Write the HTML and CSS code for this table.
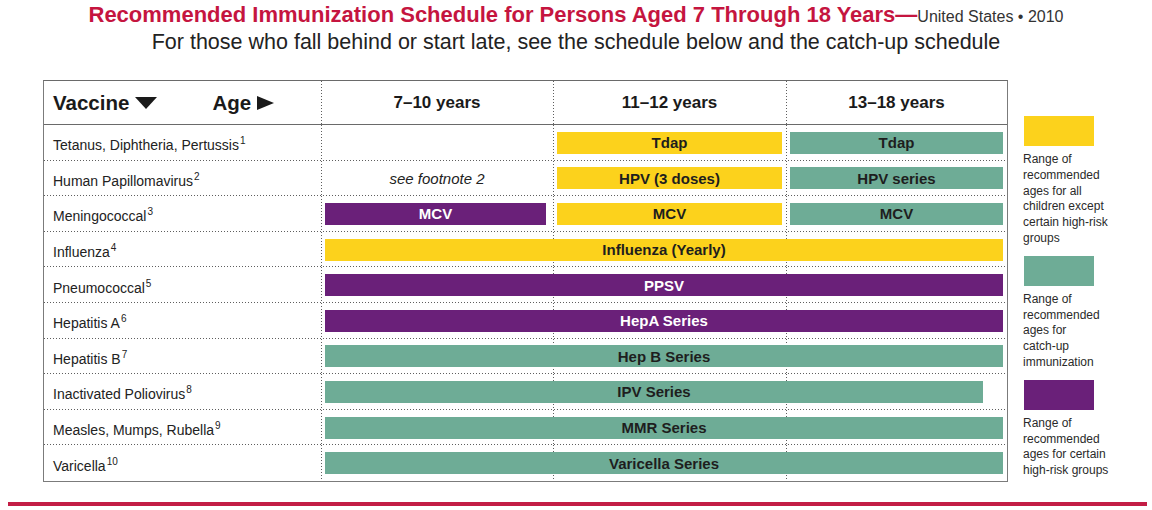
FILE: index.html
```html
<!DOCTYPE html>
<html lang="en">
<head>
<meta charset="utf-8">
<title>Recommended Immunization Schedule 7–18 Years</title>
<link rel="stylesheet" href="styles.css">
</head>
<body>
<header class="head">
  <h1 class="title">Recommended Immunization Schedule for Persons Aged 7 Through 18 Years<span class="dash">—</span><span class="region">United States • 2010</span></h1>
  <p class="subtitle">For those who fall behind or start late, see the schedule below and the catch-up schedule</p>
</header>

<main class="main">
  <section class="schedule">
    <div class="row hdr">
      <div class="cell c1 hlabel">
        <span class="vac">Vaccine<svg class="tri-down" viewBox="0 0 22 12" width="22" height="12"><polygon points="0,0 22,0 11,12" fill="#1a1a1a"/></svg></span>
        <span class="age">Age<svg class="tri-right" viewBox="0 0 17 14" width="17" height="14"><polygon points="0,0 17,7 0,14" fill="#1a1a1a"/></svg></span>
      </div>
      <div class="cell c2 hcol">7–10 years</div>
      <div class="cell c3 hcol">11–12 years</div>
      <div class="cell c4 hcol">13–18 years</div>
    </div>

    <div class="body">
      <div class="row">
        <div class="cell c1 label"><span>Tetanus, Diphtheria, Pertussis<sup>1</sup></span></div>
        <div class="cell c2"></div><div class="cell c3"></div><div class="cell c4"></div>
        <div class="bar yellow s3">Tdap</div>
        <div class="bar teal s4">Tdap</div>
      </div>
      <div class="row">
        <div class="cell c1 label"><span>Human Papillomavirus<sup>2</sup></span></div>
        <div class="cell c2 note">see footnote 2</div><div class="cell c3"></div><div class="cell c4"></div>
        <div class="bar yellow s3">HPV (3 doses)</div>
        <div class="bar teal s4">HPV series</div>
      </div>
      <div class="row">
        <div class="cell c1 label"><span>Meningococcal<sup>3</sup></span></div>
        <div class="cell c2"></div><div class="cell c3"></div><div class="cell c4"></div>
        <div class="bar purple s2 short">MCV</div>
        <div class="bar yellow s3">MCV</div>
        <div class="bar teal s4">MCV</div>
      </div>
      <div class="row">
        <div class="cell c1 label"><span>Influenza<sup>4</sup></span></div>
        <div class="cell c2"></div><div class="cell c3"></div><div class="cell c4"></div>
        <div class="bar yellow sall">Influenza (Yearly)</div>
      </div>
      <div class="row">
        <div class="cell c1 label"><span>Pneumococcal<sup>5</sup></span></div>
        <div class="cell c2"></div><div class="cell c3"></div><div class="cell c4"></div>
        <div class="bar purple sall">PPSV</div>
      </div>
      <div class="row">
        <div class="cell c1 label"><span>Hepatitis A<sup>6</sup></span></div>
        <div class="cell c2"></div><div class="cell c3"></div><div class="cell c4"></div>
        <div class="bar purple sall">HepA Series</div>
      </div>
      <div class="row">
        <div class="cell c1 label"><span>Hepatitis B<sup>7</sup></span></div>
        <div class="cell c2"></div><div class="cell c3"></div><div class="cell c4"></div>
        <div class="bar teal sall">Hep B Series</div>
      </div>
      <div class="row">
        <div class="cell c1 label"><span>Inactivated Poliovirus<sup>8</sup></span></div>
        <div class="cell c2"></div><div class="cell c3"></div><div class="cell c4"></div>
        <div class="bar teal sall ipv">IPV Series</div>
      </div>
      <div class="row">
        <div class="cell c1 label"><span>Measles, Mumps, Rubella<sup>9</sup></span></div>
        <div class="cell c2"></div><div class="cell c3"></div><div class="cell c4"></div>
        <div class="bar teal sall">MMR Series</div>
      </div>
      <div class="row last">
        <div class="cell c1 label"><span>Varicella<sup>10</sup></span></div>
        <div class="cell c2"></div><div class="cell c3"></div><div class="cell c4"></div>
        <div class="bar teal sall">Varicella Series</div>
      </div>
    </div>
  </section>

  <aside class="legend">
    <div class="key">
      <div class="swatch yellow"></div>
      <p class="key-text">Range of<br>recommended<br>ages for all<br>children except<br>certain high-risk<br>groups</p>
    </div>
    <div class="key">
      <div class="swatch teal"></div>
      <p class="key-text">Range of<br>recommended<br>ages for<br>catch-up<br>immunization</p>
    </div>
    <div class="key">
      <div class="swatch purple"></div>
      <p class="key-text">Range of<br>recommended<br>ages for certain<br>high-risk groups</p>
    </div>
  </aside>
</main>

<div class="rule"></div>
</body>
</html>
```

FILE: styles.css
```css
html, body {
  margin: 0;
  padding: 0;
  background: #ffffff;
}
body {
  width: 1152px;
  height: 510px;
  overflow: hidden;
  font-family: "Liberation Sans", Arial, Helvetica, sans-serif;
  color: #222;
}

/* ---------- heading ---------- */
.head {
  padding-top: 2px;
  text-align: center;
}
.title {
  margin: 0;
  height: 26px;
  font-size: 22px;
  line-height: 26px;
  font-weight: bold;
  color: #c5153f;
  white-space: nowrap;
}
.title .region {
  font-size: 16px;
  line-height: 1;
  font-weight: normal;
  color: #333;
}
.subtitle {
  margin: 2px 0 0;
  height: 24px;
  font-size: 21.5px;
  line-height: 24px;
  color: #222;
  white-space: nowrap;
}

/* ---------- layout ---------- */
.main {
  display: flex;
  align-items: flex-start;
  margin-top: 26px;
  padding-left: 43px;
}

/* ---------- schedule table ---------- */
.schedule {
  box-sizing: border-box;
  width: 965px;
  height: 402px;
  border: 1px solid #7b7b7b;
  border-top-color: #6a6a6a;
  display: flex;
  flex-direction: column;
}
.row {
  display: grid;
  grid-template-columns: 277px 232px 233px 221px;
  grid-template-rows: 100%;
  background-image: linear-gradient(to right, #5e5e5e 1px, transparent 1px);
  background-size: 3px 1px;
  background-repeat: repeat-x;
  background-position: 0 100%;
}
.row.hdr {
  box-sizing: border-box;
  height: 44px;
  flex: none;
  background: none;
  border-bottom: 1px solid #6a6a6a;
}
.row.last {
  background: none;
}
.body {
  flex: 1;
  display: flex;
  flex-direction: column;
}
.body .row {
  flex: 1;
}

.cell {
  grid-row: 1;
  display: flex;
  align-items: center;
  min-width: 0;
}
.c1 { grid-column: 1; }
.c2 { grid-column: 2; }
.c3 { grid-column: 3; }
.c4 { grid-column: 4; }
.c2, .c3, .c4 {
  background-image: linear-gradient(to bottom, #5e5e5e 1px, transparent 1px);
  background-size: 1px 3px;
  background-repeat: repeat-y;
  background-position: 0 0;
}

.hlabel {
  padding-left: 9px;
  font-size: 20.5px;
  font-weight: bold;
  color: #1a1a1a;
}
.vac, .age {
  display: inline-flex;
  align-items: center;
}
.tri-down { margin-left: 6px; }
.age { margin-left: 55px; }
.tri-right { margin-left: 6px; }

.hcol {
  justify-content: center;
  font-size: 17px;
  font-weight: bold;
  color: #1a1a1a;
}

.label {
  box-sizing: border-box;
  padding: 5px 0 0 9px;
  font-size: 14px;
  line-height: 16px;
  color: #222;
  white-space: nowrap;
}
.label sup {
  font-size: 10px;
  line-height: 0;
  vertical-align: 6px;
  margin-left: 1px;
}
.note {
  justify-content: center;
  font-size: 15px;
  font-style: italic;
  color: #222;
}

/* ---------- bars ---------- */
.bar {
  grid-row: 1;
  align-self: center;
  z-index: 1;
  height: 22px;
  margin: 0 4px;
  display: flex;
  align-items: center;
  justify-content: center;
  font-size: 15px;
  font-weight: bold;
  color: #1e1e1e;
  white-space: nowrap;
}
.s2 { grid-column: 2; }
.s3 { grid-column: 3; }
.s4 { grid-column: 4; }
.sall { grid-column: 2 / 5; }
.bar.short { margin-right: 7px; }
.bar.ipv { margin-right: 24px; }

.yellow { background: #fcd21c; }
.teal { background: #6eac96; }
.purple { background: #6a2079; }
.bar.purple { color: #ffffff; }

/* ---------- legend ---------- */
.legend {
  margin-left: 15px;
  padding-top: 36px;
  width: 110px;
  display: flex;
  flex-direction: column;
  gap: 9px;
}
.swatch {
  width: 70px;
  height: 30px;
  margin-left: 1px;
}
.key-text {
  margin: 6px 0 0;
  font-size: 12px;
  line-height: 15.8px;
  color: #2a2a2a;
}

/* ---------- bottom rule ---------- */
.rule {
  height: 4px;
  margin: 20px 5px 0 8px;
  background: #c31d45;
}
```
